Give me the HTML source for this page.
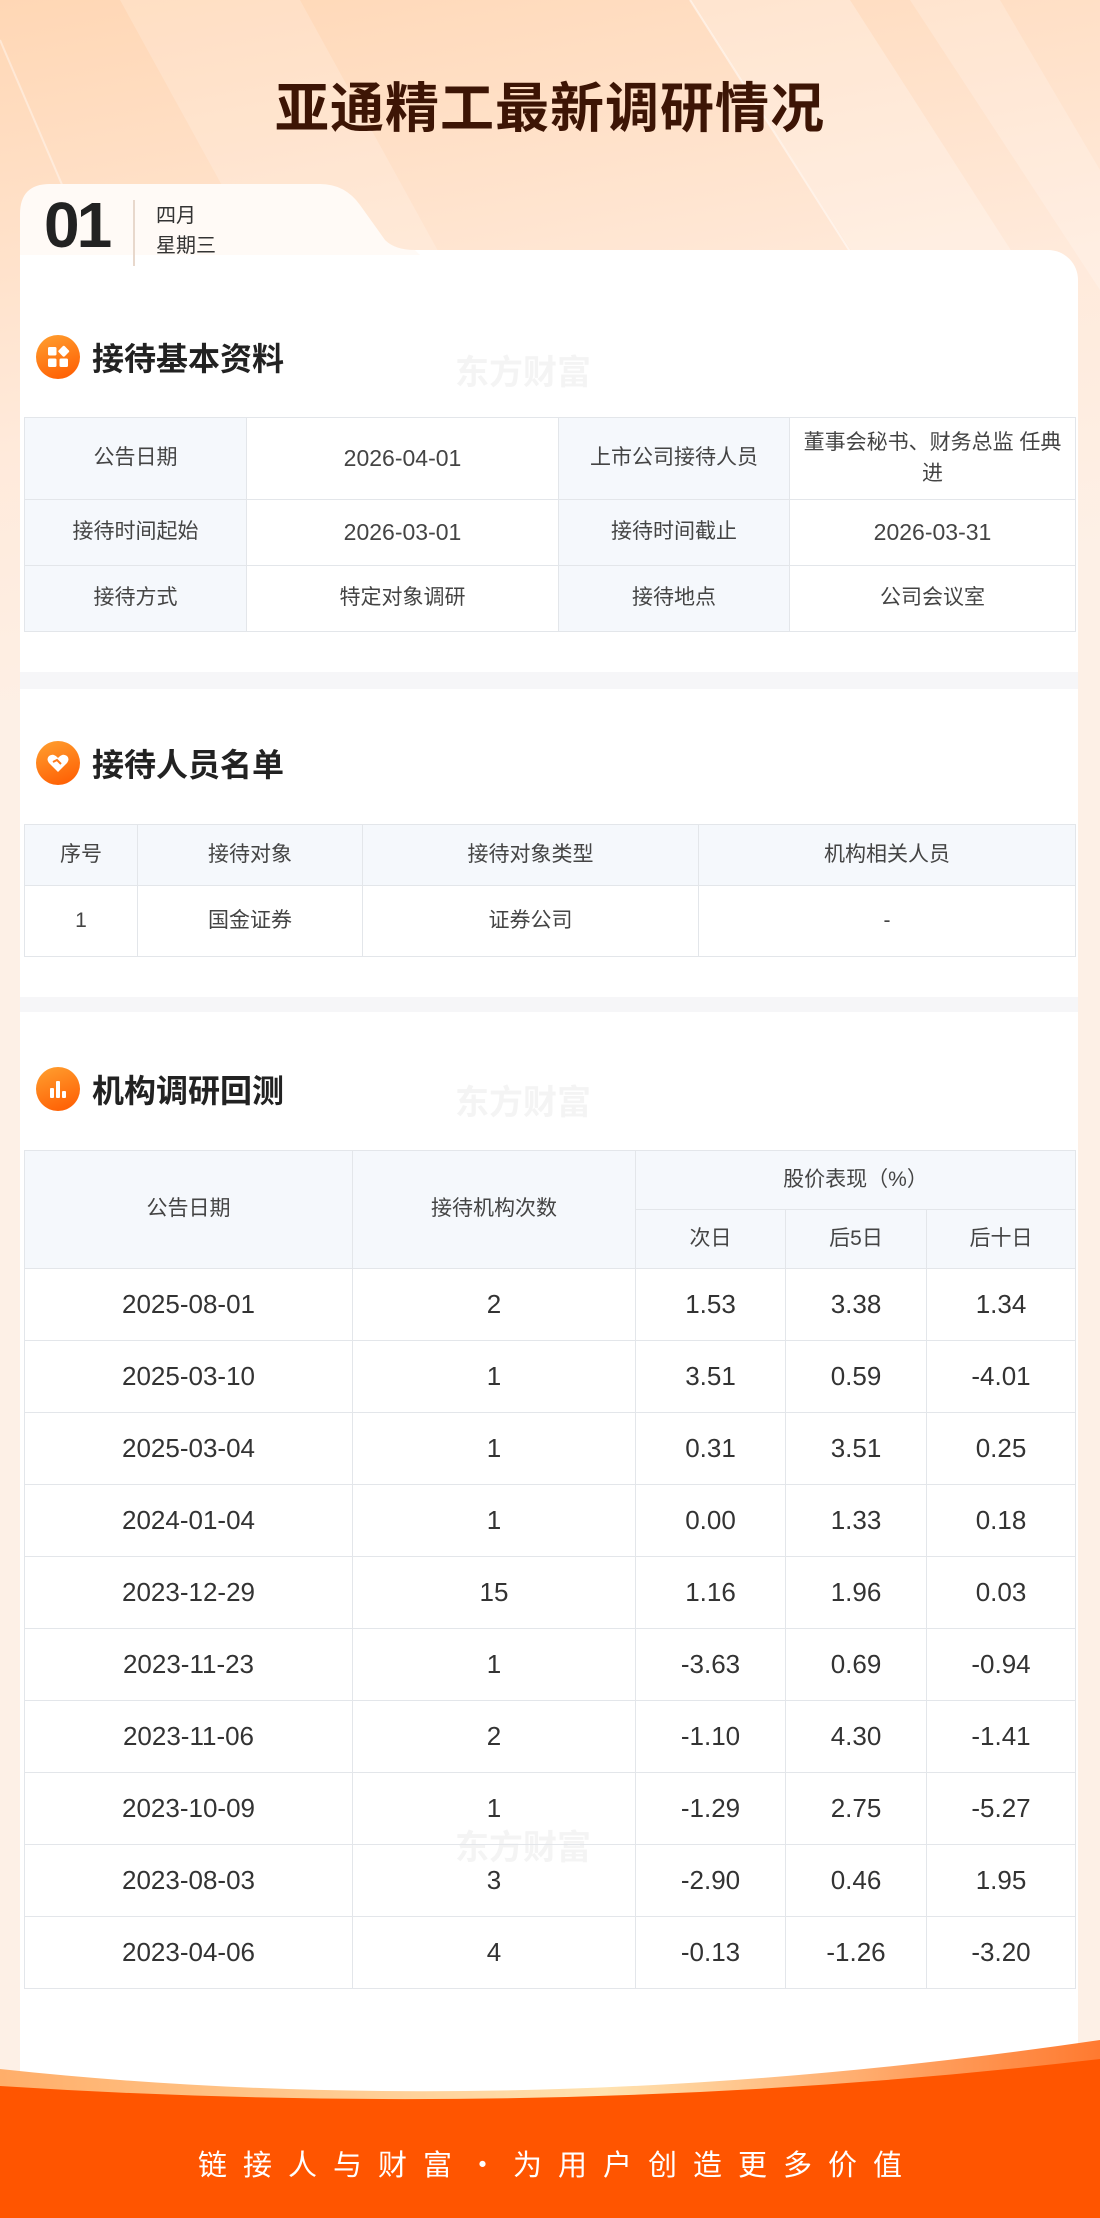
<!DOCTYPE html>
<html><head><meta charset="utf-8"><style>
*{margin:0;padding:0;box-sizing:border-box}
body{width:1100px;height:2218px;position:relative;overflow:hidden;background:#fdf0e6;font-family:"Liberation Sans","Noto Sans CJK SC",sans-serif;color:#333}
.abs{position:absolute}
.title{left:0;width:1100px;top:64px;text-align:center;font-size:54px;font-weight:bold;color:#3d1505;letter-spacing:1px;font-family:"Noto Sans CJK SC",sans-serif}
.card{left:20px;top:250px;width:1058px;height:1900px;background:#fff;border-top-right-radius:30px}
.band{left:20px;width:1058px;background:#f6f6f8}
.hd{left:36px;height:46px;display:flex;align-items:center}
.ic{width:44px;height:44px;border-radius:50%;background:linear-gradient(160deg,#ffa030,#ff5a00);display:flex;align-items:center;justify-content:center;margin-right:12px}
.hd span{font-size:32px;font-weight:bold;color:#222;font-family:"Noto Sans CJK SC",sans-serif}
.wm{font-size:34px;font-weight:bold;color:#f4f4f4;font-family:"Noto Sans CJK SC",sans-serif;left:455px}
table{position:absolute;left:24px;width:1052px;border-collapse:collapse;table-layout:fixed}
td{border:1.5px solid #e3e6ea;text-align:center;font-size:21px;color:#444;padding:0 8px;line-height:1.45}
.l{background:#f5f8fc}
.n{font-size:26px;color:#333}
.m{font-size:23px;color:#444}
thead td{background:#f5f8fc}
</style></head><body>
<svg class="abs" style="left:0;top:0" width="1100" height="700">
<defs><linearGradient id="bg" x1="0" y1="0" x2="0.3" y2="1"><stop offset="0" stop-color="#ffd7b5"/><stop offset="0.6" stop-color="#ffeadb"/><stop offset="1" stop-color="#fdf0e6"/></linearGradient></defs>
<rect width="1100" height="700" fill="url(#bg)"/>
<polygon points="120,0 300,0 520,400 340,400" fill="#fff" opacity="0.18"/>
<polygon points="690,0 850,0 1030,280 870,280" fill="#fff" opacity="0.25"/>
<polygon points="910,0 1000,0 1100,170 1100,290" fill="#fff" opacity="0.2"/>
<line x1="0" y1="40" x2="150" y2="390" stroke="#fff" stroke-width="2" opacity="0.4"/>
<line x1="690" y1="0" x2="900" y2="330" stroke="#fff" stroke-width="2" opacity="0.5"/>
</svg>
<div class="abs title">亚通精工最新调研情况</div>
<div class="abs card"></div>
<svg class="abs" style="left:0;top:180px" width="460" height="80"><path d="M20,75 V34 Q20,4 50,4 H320 Q345,4 360,25 L385,60 Q395,70 415,70 L420,75 Z" fill="#fffaf6"/></svg>
<div class="abs" style="left:44px;top:188px;font-size:64px;font-weight:bold;color:#222;letter-spacing:-3px">01</div>
<div class="abs" style="left:133px;top:200px;width:1.5px;height:66px;background:#e8d8cc"></div>
<div class="abs" style="left:156px;top:201px;font-size:20px;color:#333;line-height:30px">四月<br>星期三</div>

<div class="abs hd" style="top:334px"><div class="ic"><svg width="24" height="24" viewBox="0 0 24 24"><rect x="2" y="2" width="8.5" height="8.5" rx="1.5" fill="#fff"/><rect x="13.5" y="2" width="8.5" height="8.5" rx="1.5" fill="#fff" transform="rotate(45 17.75 6.25)"/><rect x="2" y="13.5" width="8.5" height="8.5" rx="1.5" fill="#fff"/><rect x="13.5" y="13.5" width="8.5" height="8.5" rx="1.5" fill="#fff"/></svg></div><span>接待基本资料</span></div>
<div class="abs wm" style="top:345px">东方财富</div>
<table style="top:417px">
<colgroup><col style="width:222px"><col style="width:312px"><col style="width:231px"><col></colgroup>
<tr style="height:82px"><td class="l">公告日期</td><td class="m">2026-04-01</td><td class="l">上市公司接待人员</td><td>董事会秘书、财务总监 任典进</td></tr>
<tr style="height:66px"><td class="l">接待时间起始</td><td class="m">2026-03-01</td><td class="l">接待时间截止</td><td class="m">2026-03-31</td></tr>
<tr style="height:66px"><td class="l">接待方式</td><td>特定对象调研</td><td class="l">接待地点</td><td>公司会议室</td></tr>
</table>
<div class="abs band" style="top:672px;height:17px"></div>

<div class="abs hd" style="top:740px"><div class="ic"><svg width="26" height="26" viewBox="0 0 26 26"><path d="M13 22 L4 13 Q1 9 4 6 Q8 3 12 7 L13 8 L14 7 Q18 3 22 6 Q25 9 22 13 Z" fill="#fff"/><path d="M8 12 L12 10 L16 14" stroke="#ff7a1a" stroke-width="2" fill="none"/></svg></div><span>接待人员名单</span></div>
<table style="top:824px">
<colgroup><col style="width:113px"><col style="width:225px"><col style="width:336px"><col></colgroup>
<thead><tr style="height:61px"><td>序号</td><td>接待对象</td><td>接待对象类型</td><td>机构相关人员</td></tr></thead>
<tr style="height:71px"><td>1</td><td>国金证券</td><td>证券公司</td><td>-</td></tr>
</table>
<div class="abs band" style="top:997px;height:15px"></div>

<div class="abs hd" style="top:1066px"><div class="ic"><svg width="24" height="24" viewBox="0 0 24 24"><rect x="4" y="11" width="4" height="10" rx="1" fill="#fff"/><rect x="10" y="4" width="4" height="17" rx="1" fill="#fff"/><rect x="16" y="14" width="4" height="7" rx="1" fill="#fff"/></svg></div><span>机构调研回测</span></div>
<div class="abs wm" style="top:1075px">东方财富</div>
<div class="abs wm" style="top:1820px">东方财富</div>
<table style="top:1150px">
<colgroup><col style="width:328px"><col style="width:283px"><col style="width:150px"><col style="width:141px"><col></colgroup>
<thead><tr style="height:59px"><td rowspan="2">公告日期</td><td rowspan="2">接待机构次数</td><td colspan="3">股价表现（%）</td></tr>
<tr style="height:59px"><td>次日</td><td>后5日</td><td>后十日</td></tr></thead>
<tr style="height:72px"><td class="n">2025-08-01</td><td class="n">2</td><td class="n">1.53</td><td class="n">3.38</td><td class="n">1.34</td></tr>
<tr style="height:72px"><td class="n">2025-03-10</td><td class="n">1</td><td class="n">3.51</td><td class="n">0.59</td><td class="n">-4.01</td></tr>
<tr style="height:72px"><td class="n">2025-03-04</td><td class="n">1</td><td class="n">0.31</td><td class="n">3.51</td><td class="n">0.25</td></tr>
<tr style="height:72px"><td class="n">2024-01-04</td><td class="n">1</td><td class="n">0.00</td><td class="n">1.33</td><td class="n">0.18</td></tr>
<tr style="height:72px"><td class="n">2023-12-29</td><td class="n">15</td><td class="n">1.16</td><td class="n">1.96</td><td class="n">0.03</td></tr>
<tr style="height:72px"><td class="n">2023-11-23</td><td class="n">1</td><td class="n">-3.63</td><td class="n">0.69</td><td class="n">-0.94</td></tr>
<tr style="height:72px"><td class="n">2023-11-06</td><td class="n">2</td><td class="n">-1.10</td><td class="n">4.30</td><td class="n">-1.41</td></tr>
<tr style="height:72px"><td class="n">2023-10-09</td><td class="n">1</td><td class="n">-1.29</td><td class="n">2.75</td><td class="n">-5.27</td></tr>
<tr style="height:72px"><td class="n">2023-08-03</td><td class="n">3</td><td class="n">-2.90</td><td class="n">0.46</td><td class="n">1.95</td></tr>
<tr style="height:72px"><td class="n">2023-04-06</td><td class="n">4</td><td class="n">-0.13</td><td class="n">-1.26</td><td class="n">-3.20</td></tr>
</table>

<svg class="abs" style="left:0;top:2030px" width="1100" height="188">
<defs><linearGradient id="fg" x1="0" y1="0" x2="1" y2="0"><stop offset="0" stop-color="#ffae6a"/><stop offset="0.55" stop-color="#ffe2b0"/><stop offset="1" stop-color="#ff7a30"/></linearGradient></defs>
<path d="M0,39 Q520,95 1100,10 V188 H0 Z" fill="url(#fg)"/>
<path d="M0,56 Q560,92 1100,29 V188 H0 Z" fill="#ff5500"/>
</svg>
<div class="abs" style="left:0;width:1100px;top:2142px;text-align:center;font-size:29px;color:#fff;letter-spacing:16px;padding-left:16px;font-family:'Noto Sans CJK SC',sans-serif">链接人与财富·为用户创造更多价值</div>
</body></html>
